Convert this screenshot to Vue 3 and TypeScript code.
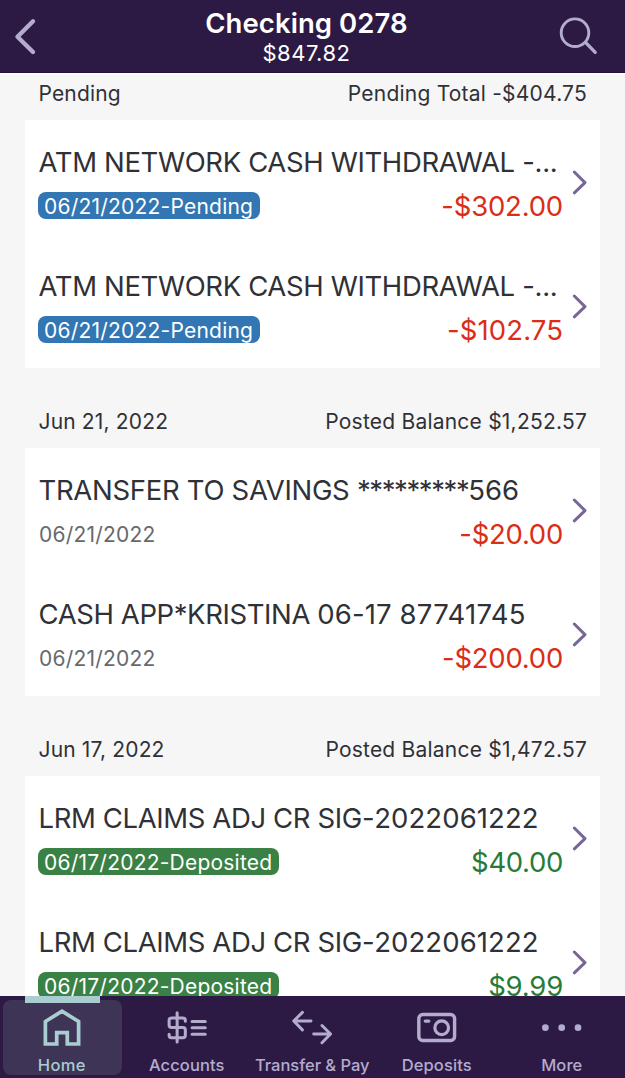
<script setup lang="ts">
interface TextRun {
  text: string
  spacing: number
}

interface Transaction {
  title: TextRun[]
  date: string
  amount: TextRun
  tone: 'debit' | 'credit'
  tag?: 'pending' | 'deposited'
}

interface Section {
  label: string
  summary: string
  items: Transaction[]
}

const atm: TextRun[] = [
  { text: 'ATM NETWORK CASH WITHDRAWAL ', spacing: -0.36 },
  { text: '-...', spacing: -0.3 },
]
const claims: TextRun[] = [
  { text: 'LRM CLAIMS ADJ CR SIG-', spacing: -0.38 },
  { text: '2022061222', spacing: 0.1 },
]

const sections: Section[] = [
  {
    label: 'Pending',
    summary: 'Pending Total -$404.75',
    items: [
      { title: atm, date: '06/21/2022-Pending', amount: { text: '-$302.00', spacing: -0.2 }, tone: 'debit', tag: 'pending' },
      { title: atm, date: '06/21/2022-Pending', amount: { text: '-$102.75', spacing: 0.1 }, tone: 'debit', tag: 'pending' },
    ],
  },
  {
    label: 'Jun 21, 2022',
    summary: 'Posted Balance $1,252.57',
    items: [
      {
        title: [
          { text: 'TRANSFER TO SAVINGS ', spacing: -0.3 },
          { text: '*********', spacing: -1.4 },
          { text: '566', spacing: 0 },
        ],
        date: '06/21/2022',
        amount: { text: '-$20.00', spacing: -0.28 },
        tone: 'debit',
      },
      {
        title: [
          { text: 'CASH APP*KRISTINA ', spacing: -0.4 },
          { text: '06-17 ', spacing: 0.1 },
          { text: '87741745', spacing: 0.3 },
        ],
        date: '06/21/2022',
        amount: { text: '-$200.00', spacing: -0.25 },
        tone: 'debit',
      },
    ],
  },
  {
    label: 'Jun 17, 2022',
    summary: 'Posted Balance $1,472.57',
    items: [
      { title: claims, date: '06/17/2022-Deposited', amount: { text: '$40.00', spacing: -0.35 }, tone: 'credit', tag: 'deposited' },
      { title: claims, date: '06/17/2022-Deposited', amount: { text: '$9.99', spacing: -0.2 }, tone: 'credit', tag: 'deposited' },
    ],
  },
]

const tabs = ['Home', 'Accounts', 'Transfer & Pay', 'Deposits', 'More']
</script>

<template>
  <div class="screen">
    <header class="top">
      <svg class="icon" width="50" height="72" viewBox="0 0 50 72">
        <path d="M33 21.3 17.5 36.7 33 52" stroke-width="4.4" />
      </svg>
      <div class="heading">
        <h1>Checking 0278</h1>
        <p>$847.82</p>
      </div>
      <svg class="icon" width="72" height="72" viewBox="0 0 72 72">
        <circle cx="22" cy="32.7" r="13.8" stroke-width="2.9" />
        <path d="M32.5 42.3 42.2 52.3" stroke-width="3.3" />
      </svg>
    </header>

    <main class="feed">
      <section v-for="section in sections" :key="section.label">
        <div class="section-head">
          <span>{{ section.label }}</span>
          <span>{{ section.summary }}</span>
        </div>
        <div class="card">
          <article v-for="(item, i) in section.items" :key="i" class="row">
            <div class="details">
              <div class="title"><span v-for="(run, r) in item.title" :key="r" :style="{ letterSpacing: run.spacing + 'px' }">{{ run.text }}</span></div>
              <div class="meta">
                <span class="date" :class="item.tag">{{ item.date }}</span>
                <span class="amount" :class="item.tone" :style="{ letterSpacing: item.amount.spacing + 'px' }">{{ item.amount.text }}</span>
              </div>
            </div>
            <svg class="chevron" width="16" height="26" viewBox="0 0 16 26">
              <path d="M2.3 3 13 13.6 2.3 23.8" />
            </svg>
          </article>
        </div>
      </section>
    </main>

    <nav class="tabs">
      <div v-for="(tab, i) in tabs" :key="tab" class="tab" :class="{ active: i === 0, wide: i === 2 }">
        <svg class="icon" width="44" height="44" viewBox="0 0 44 44">
          <path v-if="i === 0" class="square" d="M5 15.9 22 5.3 39 15.9V38.9H27.4V27.2H16.6V38.9H5Z" stroke-width="3.8" />
          <g v-else-if="i === 1" stroke-width="3.1">
            <path d="M11.9 7V36.8M20.3 15.6V14.7Q20.3 12.2 17.8 12.2H6.2Q3.7 12.2 3.7 14.7V19.5Q3.7 22 6.2 22H17.8Q20.3 22 20.3 24.5V30Q20.3 32.5 17.8 32.5H6.2Q3.7 32.5 3.7 30V29" />
            <path d="M27.2 15.8H40.7M27.2 22.2H40.7M27.2 28.8H40.7" />
          </g>
          <path v-else-if="i === 2" d="M21 15.4H3.6M12.2 6.5 3.3 15.4 12.2 24.4M23.7 28.7H41M32.2 19.9 41 28.7 32.2 37.6" stroke-width="3" />
          <g v-else-if="i === 3">
            <rect x="3.4" y="8.7" width="36.6" height="26.6" rx="4" stroke-width="3.5" />
            <circle cx="26.8" cy="22.2" r="7" stroke-width="3.3" />
            <path d="M10 15.4H13.6" stroke-width="3.4" />
          </g>
          <g v-else class="dots">
            <circle cx="5" cy="22.2" r="3.4" />
            <circle cx="21.7" cy="22.2" r="3.4" />
            <circle cx="38.4" cy="22.2" r="3.4" />
          </g>
        </svg>
        <span>{{ tab }}</span>
      </div>
    </nav>
  </div>
</template>

<style>
body { background: #f6f6f6; }
</style>

<style scoped>
.screen {
  display: flex;
  flex-direction: column;
  width: 625px;
  height: 1078px;
  overflow: hidden;
  background: #f6f6f6;
  color: #303136;
  font-family: Inter, "Liberation Sans", sans-serif;
}
.top {
  flex: none;
  box-sizing: border-box;
  display: grid;
  grid-template-columns: 50px 1fr 72px;
  height: 73px;
  background: #2c1a45;
  border-bottom: 1px solid #22103b;
  box-shadow: 0 1px 1px #fff;
  color: #fff;
}
.heading {
  padding: 6px 0 0 10px;
  text-align: center;
  white-space: nowrap;
}
h1, p { margin: 0; }
h1 { font-size: 27.5px; font-weight: 600; line-height: 34px; letter-spacing: 0.07px; }
p { font-size: 22px; line-height: 26px; letter-spacing: 0.5px; }
.icon {
  display: block;
  fill: none;
  stroke: #b4accd;
  stroke-linecap: round;
  stroke-linejoin: round;
}
.feed { flex: 1; min-height: 0; overflow: hidden; }
.section-head {
  box-sizing: border-box;
  display: flex;
  justify-content: space-between;
  height: 80px;
  padding: 40px 38px 0 39px;
  font-size: 21px;
  line-height: 27px;
  letter-spacing: 0.22px;
  white-space: nowrap;
}
section:first-child .section-head { height: 47px; padding-top: 7px; }
.section-head span:first-child { letter-spacing: 0.16px; margin-left: -0.5px; }
.card { margin: 0 25px; background: #fff; }
.row {
  box-sizing: border-box;
  display: flex;
  height: 124px;
  padding: 25px 11px 0 14px;
}
.details { width: 524px; }
.title {
  margin-left: -0.5px;
  font-size: 27.5px;
  line-height: 34px;
  white-space: pre;
}
.meta {
  display: flex;
  justify-content: space-between;
  padding-top: 10px;
}
.date {
  height: 27px;
  margin-top: 3px;
  color: #68696c;
  font-size: 21px;
  line-height: 29px;
  letter-spacing: 0.22px;
}
.pending, .deposited {
  margin-left: -1px;
  padding: 0 7px 0 6px;
  border-radius: 8px;
  color: #fff;
}
.pending { background: #3276b3; }
.deposited { background: #398144; }
.amount { font-size: 27.5px; line-height: 34px; }
.debit { color: #db2d17; }
.credit { color: #277b37; }
.chevron {
  flex: none;
  margin: 24px 0 0 9px;
  fill: none;
  stroke: #786696;
  stroke-width: 3;
  stroke-linecap: round;
  stroke-linejoin: round;
}
.tabs {
  flex: none;
  box-sizing: border-box;
  display: grid;
  grid-template-columns: repeat(5, 125px);
  height: 82px;
  background: #2c1a45;
}
.tab {
  box-sizing: border-box;
  position: relative;
  display: flex;
  flex-direction: column;
  align-items: center;
  height: 75px;
  margin: 4px 3px 0;
  padding: 6px 1.5px 0 0;
  border-radius: 8px;
  color: #b4accd;
  font-size: 16.5px;
  font-weight: 500;
  line-height: 20px;
  letter-spacing: 0.1px;
  white-space: nowrap;
}
.tab span { margin-top: 6px; }
.wide span { margin-left: 1px; letter-spacing: -0.03px; }
.active { background: #3e3456; color: #a9cdd0; }
.active span { letter-spacing: 0.3px; }
.active::before {
  content: "";
  position: absolute;
  top: -4px;
  left: 22px;
  width: 75px;
  height: 7px;
  background: #a9cdd0;
}
.active .icon { stroke: #a9cdd0; }
.square { stroke-linejoin: miter; }
.dots { fill: #b4accd; stroke: none; }
</style>
